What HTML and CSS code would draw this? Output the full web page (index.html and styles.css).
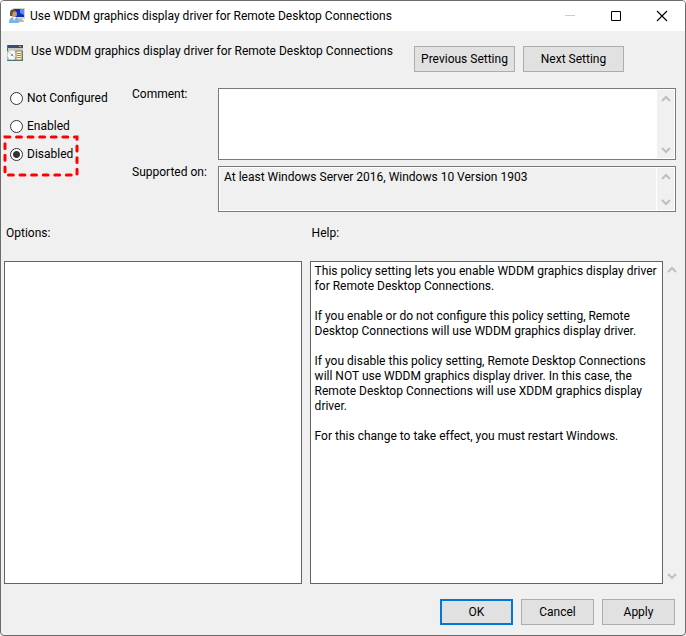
FILE: index.html
```html
<!DOCTYPE html>
<html lang="en">
<head>
    <meta charset="UTF-8">
    <meta name="viewport" content="width=device-width, initial-scale=1.0">
    <title>Use WDDM graphics display driver for Remote Desktop Connections</title>
    <link rel="stylesheet" href="styles.css">
</head>
<body>
    <form class="window">
        <header class="titlebar">
            <svg class="icon" viewBox="0 0 16 16" aria-hidden="true">
                <rect x="4" y="0" width="12" height="11" fill="#d6d3c8"/>
                <rect x="5" y="1" width="10" height="8" fill="#0a2fc4"/>
                <path d="M11 1h4v6l-4-2z" fill="#5f8cf0"/>
                <path d="M9 11h4l2 2v1H9z" fill="#b9b8ae"/>
                <path d="M0 15c0-4 2-6 5-6s5 2 5 6z" fill="#79b4e4"/>
                <path d="M4 9l1 4 2-4z" fill="#fff"/>
                <circle cx="5" cy="6" r="3" fill="#c99a69"/>
                <path d="M1 8V4c0-3 5-4 6-1L4 4 3 8z" fill="#5e5548"/>
            </svg>
            <h1 class="title">Use WDDM graphics display driver for Remote Desktop Connections</h1>
            <div class="window-buttons">
                <button type="button" class="window-button" aria-label="Minimize" disabled>
                    <svg viewBox="0 0 12 12"><path d="M1 5.5h10" stroke="#ccc"/></svg>
                </button>
                <button type="button" class="window-button" aria-label="Maximize">
                    <svg viewBox="0 0 12 12"><path d="M1.5 1.5h9v9h-9z" fill="none" stroke="#000"/></svg>
                </button>
                <button type="button" class="window-button" aria-label="Close">
                    <svg viewBox="0 0 12 12"><path d="M1 1l10 10M11 1L1 11" stroke="#000" stroke-width="1.2"/></svg>
                </button>
            </div>
        </header>

        <div class="setting">
            <svg class="icon" viewBox="0 0 16 16" aria-hidden="true">
                <rect width="16" height="16" fill="#3f7a74"/>
                <rect x="1" y="0" width="15" height="3" fill="#3b4a80"/>
                <rect x="1" y="3" width="15" height="3" fill="#c8c8c4"/>
                <path d="M12 1.5h2" stroke="#e0c040"/>
                <rect x="0" y="6" width="10" height="9" fill="#b8b8b4"/>
                <circle cx="5" cy="10" r="4.5" fill="#f8f8f8"/>
                <path d="M5 10L2 7M5 10l3 3" stroke="#b8dcc0"/>
                <circle cx="5" cy="10" r="1" fill="#777"/>
                <rect x="9" y="6" width="6" height="9" fill="#fff6d0" stroke="#8a7a50"/>
                <path d="M10 8.5h4M10 10.5h4M10 12.5h4" stroke="#a08c50"/>
            </svg>
            <h2 class="setting-name">Use WDDM graphics display driver for Remote Desktop Connections</h2>
            <div class="setting-nav">
                <button type="button" class="button wide">Previous Setting</button>
                <button type="button" class="button wide">Next Setting</button>
            </div>
        </div>

        <div class="details">
            <div class="states">
                <label class="state"><input type="radio" name="state"> Not Configured</label>
                <label class="state"><input type="radio" name="state"> Enabled</label>
                <label class="state"><input type="radio" name="state" checked> Disabled
                    <svg class="highlight" viewBox="0 0 76 42" aria-hidden="true"><rect x="2" y="2" width="72" height="38" pathLength="228"/></svg>
                </label>
            </div>
            <label class="field-label" for="comment">Comment:</label>
            <div class="field">
                <textarea id="comment" class="text comment"></textarea>
                <div class="scroll">
                    <button type="button" aria-label="Scroll up"><svg viewBox="0 0 10 8"><path d="M1 6l4-4 4 4"/></svg></button>
                    <button type="button" aria-label="Scroll down"><svg viewBox="0 0 10 8"><path d="M1 2l4 4 4-4"/></svg></button>
                </div>
            </div>
            <label class="field-label" for="supported">Supported on:</label>
            <div class="field readonly">
                <textarea id="supported" class="text" readonly>At least Windows Server 2016, Windows 10 Version 1903</textarea>
                <div class="scroll">
                    <button type="button" aria-label="Scroll up"><svg viewBox="0 0 10 8"><path d="M1 6l4-4 4 4"/></svg></button>
                    <button type="button" aria-label="Scroll down"><svg viewBox="0 0 10 8"><path d="M1 2l4 4 4-4"/></svg></button>
                </div>
            </div>
        </div>

        <div class="panels">
            <section class="panel-group">
                <h3 class="panel-title">Options:</h3>
                <div class="panel"></div>
            </section>
            <section class="panel-group">
                <h3 class="panel-title">Help:</h3>
                <div class="help">
                    <div class="panel">
                        <p>This policy setting lets you enable WDDM graphics display driver for Remote Desktop Connections.</p>
                        <p>If you enable or do not configure this policy setting, Remote Desktop Connections will use WDDM graphics display driver.</p>
                        <p>If you disable this policy setting, Remote Desktop Connections will NOT use WDDM graphics display driver. In this case, the Remote Desktop Connections will use XDDM graphics display driver.</p>
                        <p>For this change to take effect, you must restart Windows.</p>
                    </div>
                    <div class="scroll">
                        <button type="button" aria-label="Scroll up"><svg viewBox="0 0 10 8"><path d="M1 6l4-4 4 4"/></svg></button>
                        <button type="button" aria-label="Scroll down"><svg viewBox="0 0 10 8"><path d="M1 2l4 4 4-4"/></svg></button>
                    </div>
                </div>
            </section>
        </div>

        <footer class="actions">
            <button type="button" class="button default">OK</button>
            <button type="button" class="button">Cancel</button>
            <button type="button" class="button">Apply</button>
        </footer>
    </form>
</body>
</html>
```

FILE: styles.css
```css
* {
    box-sizing: border-box;
}

body {
    margin: 0;
    background: #fff;
}

body, button, textarea {
    font-family: "Segoe UI", Roboto, "Open Sans", sans-serif;
    font-size: 12px;
    line-height: 15px;
    color: #000;
}

h1, h2, h3, p {
    margin: 0;
    font-size: 12px;
    font-weight: normal;
}

.window {
    display: flex;
    flex-direction: column;
    min-height: 100vh;
    border: 1px solid #6b6b6b;
    border-radius: 4px;
    background: #f0f0f0;
    overflow: hidden;
}

.icon {
    width: 16px;
    height: 16px;
    flex: none;
}

.titlebar {
    display: flex;
    align-items: center;
    height: 30px;
    padding-left: 8px;
    background: #fff;
}

.title {
    flex: 1;
    padding-left: 5px;
    white-space: nowrap;
}

.window-buttons {
    display: flex;
}

.window-button {
    display: flex;
    align-items: center;
    justify-content: center;
    width: 46px;
    height: 30px;
    padding: 0;
    border: 0;
    background: none;
}

.window-button svg {
    width: 12px;
    height: 12px;
}

.setting {
    display: flex;
    padding: 13px 61px 0 6px;
}

.setting .icon {
    margin-top: 1px;
}

.setting-name {
    flex: 1;
    padding-left: 8px;
    white-space: nowrap;
}

.setting-nav {
    display: flex;
    gap: 8px;
    padding-top: 2px;
}

.button {
    width: 73px;
    height: 26px;
    padding: 0;
    border: 1px solid #adadad;
    background: #e1e1e1;
}

.button.wide {
    width: 101px;
}

.button.default {
    border: 2px solid #0078d7;
}

.details {
    display: grid;
    grid-template-columns: 123px 86px 1fr;
    row-gap: 6px;
    padding: 16px 9px 0 8px;
}

.states {
    grid-row: span 2;
    display: flex;
    flex-direction: column;
    gap: 12px;
    padding-top: 2px;
}

.state {
    position: relative;
    display: flex;
    align-items: center;
    gap: 4px;
    height: 16px;
    line-height: 16px;
}

.state input {
    appearance: none;
    width: 13px;
    height: 13px;
    margin: 0 0 0 1px;
    border: 1px solid #333;
    border-radius: 50%;
    background: #fff;
}

.state input:checked {
    background: radial-gradient(#333 0 3px, #fff 4px);
}

.highlight {
    position: absolute;
    left: -6px;
    top: -11px;
    width: 76px;
    height: 42px;
    pointer-events: none;
}

.highlight rect {
    fill: none;
    stroke: #f00;
    stroke-width: 3;
    stroke-dasharray: 5 7;
    stroke-linecap: round;
}

.field-label {
    line-height: 12px;
}

.field {
    display: flex;
    padding: 1px;
    border: 1px solid #7a7a7a;
    background: #fff;
}

.text {
    flex: 1;
    height: 42px;
    padding: 2px 4px;
    border: 0;
    outline: 0;
    resize: none;
    overflow: hidden;
    background: #fff;
}

.text.comment {
    height: 68px;
}

.readonly .text {
    background: #f0f0f0;
}

.readonly .scroll {
    margin-left: 1px;
}

.scroll {
    display: flex;
    flex-direction: column;
    justify-content: space-between;
    width: 17px;
    background: #f0f0f0;
}

.scroll button {
    display: flex;
    align-items: center;
    justify-content: center;
    height: 17px;
    padding: 0;
    border: 0;
    background: none;
}

.scroll svg {
    width: 10px;
    height: 8px;
    fill: none;
    stroke: #bfbfbf;
    stroke-width: 2;
}

.panels {
    flex: 1;
    display: grid;
    grid-template-columns: 45fr 56fr;
    gap: 8px;
    padding: 14px 5px 0 3px;
}

.panel-group {
    display: flex;
    flex-direction: column;
}

.panel-title {
    padding: 0 2px 20px;
}

.panel {
    flex: 1;
    padding: 2px 4px;
    border: 1px solid #646464;
    background: #fff;
}

.panel p {
    margin-bottom: 15px;
}

.help {
    flex: 1;
    display: flex;
}

.actions {
    display: flex;
    justify-content: flex-end;
    gap: 8px;
    padding: 15px 10px 10px;
}
```
